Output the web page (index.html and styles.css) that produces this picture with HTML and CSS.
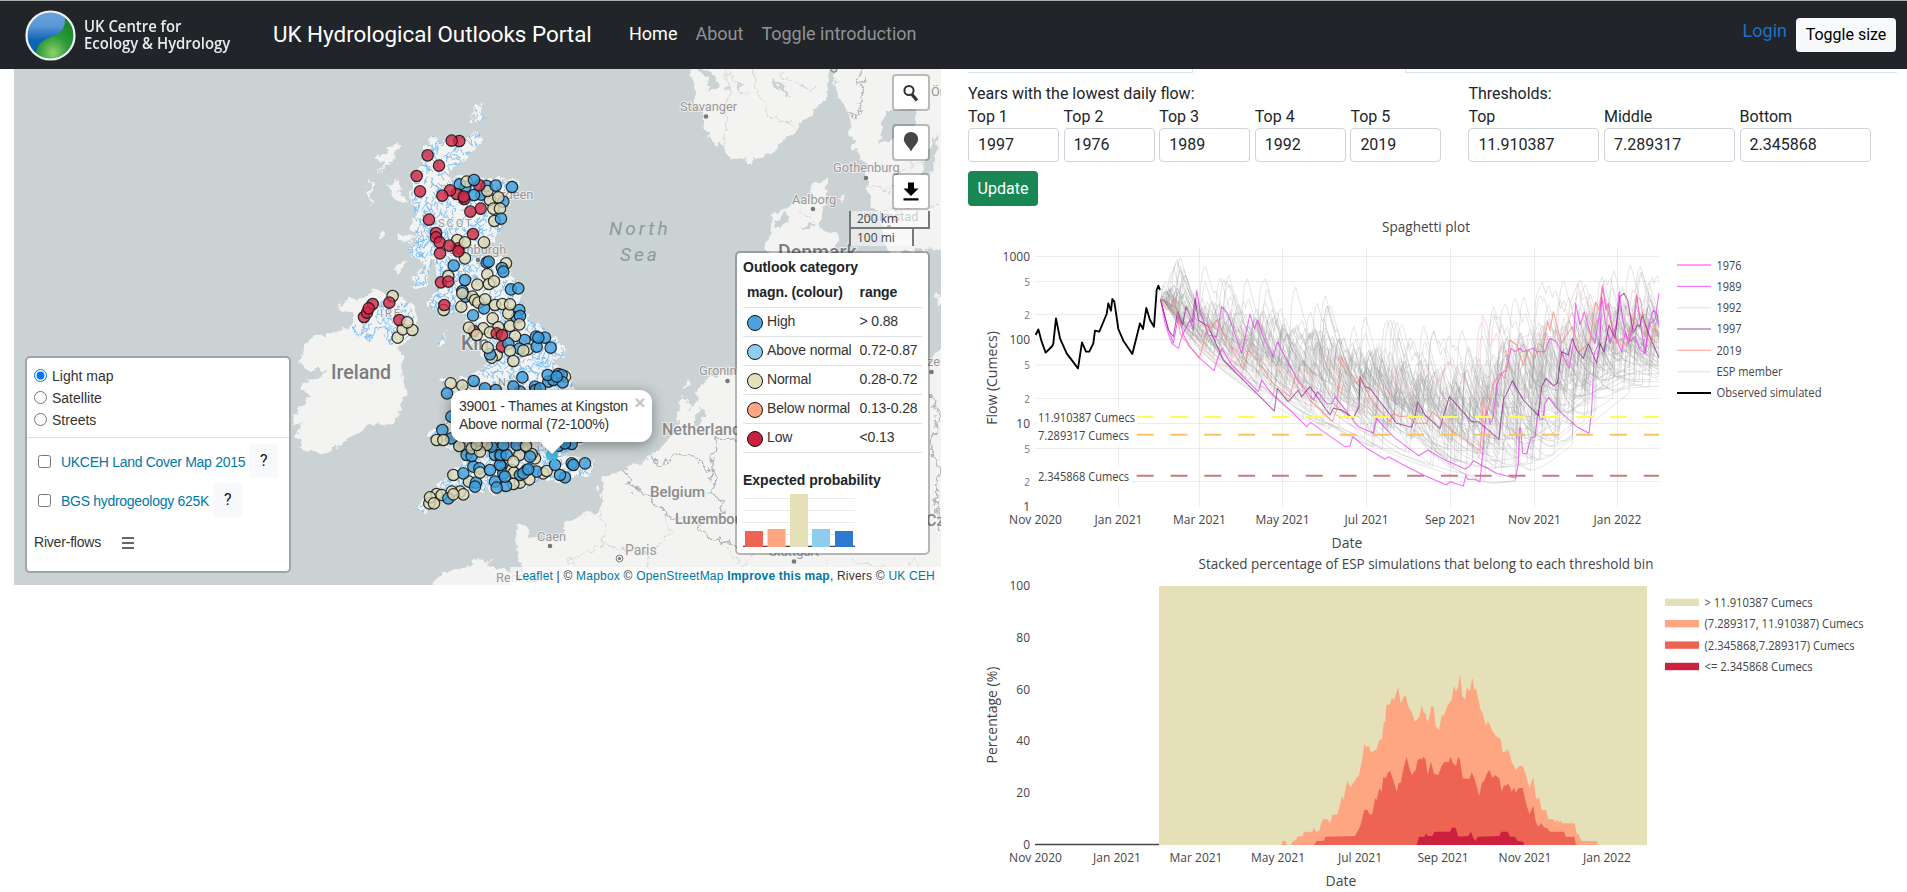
FILE: index.html
```html
<!DOCTYPE html>
<html lang="en">
<head>
<meta charset="utf-8">
<title>UK Hydrological Outlooks Portal</title>
<link rel="stylesheet" href="styles.css">
</head>
<body>
<header class="navbar">
  <div class="brand-logo">
    <svg width="51" height="51" viewBox="0 0 51 51">
      <defs>
        <linearGradient id="lb" x1="0" y1="0" x2="0" y2="1"><stop offset="0" stop-color="#6ba3dc"/><stop offset=".3" stop-color="#5b97d6"/><stop offset=".6" stop-color="#0f62b4"/></linearGradient>
        <radialGradient id="lg" cx=".45" cy=".85" r=".7"><stop offset="0" stop-color="#8fd06a"/><stop offset=".55" stop-color="#2f9c38"/><stop offset="1" stop-color="#1c8a2c"/></radialGradient>
      </defs>
      <circle cx="25.500" cy="25.500" r="24" fill="url(#lb)"/>
      <path d="M49 21A24 24 0 0 1 11 44.500C11 33 20 29 30 25.500C37 22.500 41 17 39.500 6.500A24 24 0 0 1 49 21Z" fill="url(#lg)"/>
      <circle cx="25.500" cy="25.500" r="24" fill="none" stroke="#eef3f5" stroke-width="2.200"/>
    </svg>
    <span class="brand-name">UK Centre for<br>Ecology &amp; Hydrology</span>
  </div>
  <span class="site-title">UK Hydrological Outlooks Portal</span>
  <nav class="links"><a class="active">Home</a><a>About</a><a>Toggle introduction</a></nav>
  <div class="account"><a class="login">Login</a><button class="btn btn-light">Toggle size</button></div>
</header>

<main class="page">
  <section class="map">
    <svg class="basemap" viewBox="14 69 927 516" width="927" height="516">
      <defs>
        <filter id="coast" x="-5%" y="-5%" width="110%" height="110%"><feTurbulence type="fractalNoise" baseFrequency=".11" numOctaves="3" seed="4"/><feDisplacementMap in="SourceGraphic" scale="13" xChannelSelector="R" yChannelSelector="G"/></filter>
        <clipPath id="rivers-clip"><use href="#gb" transform="translate(290 80) scale(.3333)"/><use href="#ni" transform="translate(290 80) scale(.3333)"/><use href="#ork" transform="translate(290 80) scale(.3333)"/></clipPath>
      </defs>
      <g class="land" filter="url(#coast)">
        <g transform="translate(290 80) scale(.3333)">
          <path id="gb" d="M430 165L450 185L490 170L530 175L550 158L573 160L570 185L530 230L500 262L470 285L480 300L505 290L540 300L600 298L685 300L680 330L660 360L650 400L640 440L610 480L560 505L500 520L560 525L600 530L650 540L665 575L690 620L700 665L715 720L765 745L800 780L825 800L820 830L790 840L810 870L780 885L835 870L850 920L870 960L870 1000L880 1090L850 1110L800 1125L830 1130L900 1135L915 1150L900 1185L860 1190L820 1210L760 1195L710 1225L670 1215L620 1240L560 1230L530 1250L500 1260L490 1240L450 1250L420 1270L410 1300L370 1285L400 1260L440 1235L460 1200L490 1170L540 1130L570 1100L530 1110L480 1100L440 1090L410 1070L450 1045L480 1000L500 960L460 930L455 905L520 890L570 880L585 850L570 820L540 780L530 720L520 690L480 705L430 695L415 670L440 640L440 590L435 540L425 550L410 615L370 620L380 580L405 540L370 530L350 510L385 470L360 440L375 400L360 350L370 310L372 290L395 250L400 215Z"/>
          <path d="M240 630L300 640L340 650L360 680L385 720L370 760L330 800L340 880L345 930L325 1010L310 1030L240 1035L150 1090L95 1120L50 1110L10 1060L40 1030L5 1040L20 990L60 950L30 930L60 900L110 870L50 870L30 850L40 790L80 765L130 760L175 745L190 700L140 690L165 660L205 655Z"/>
          <path id="ni" d="M240 660L300 645L340 650L360 680L385 720L370 760L330 790L300 795L270 750L240 785L200 770L185 740L225 700Z"/>
          <path id="ork" d="M550 90L580 75L570 100L590 115L560 130L548 120ZM445 790L470 750L465 780L450 795Z"/>
          <path d="M330 180L325 210L300 250L270 280L285 250L262 235ZM238 300L250 310L245 375L236 350ZM293 310L325 300L330 340L352 375L318 360ZM315 460L375 465L360 490L325 480ZM310 570L348 540L325 592ZM365 600L410 570L415 605L370 620ZM270 460h14v10h-14Z"/>
        </g>
        <path d="M430 590L437 576L446 571L467 566L482 560L500 568L514 574L522 571L513 527L527 526L530 537L537 539L557 537L567 523L597 511L602 507L600 490L602 477L623 470L647 458L655 455L670 437L677 420L681 399L686 398L690 409L698 402L695 390L703 383L707 377L737 372L762 368L770 350L765 300L767 252L768 233L773 217L787 207L807 200L813 187L830 177L827 190L823 205L820 227L840 235L833 250L840 330L900 360L920 372L936 350L950 346L950 595Z"/>
        <path d="M688 60L696 97L702 112L702 127L712 140L730 157L753 162L773 153L797 127L813 113L827 97L831 60ZM834 60L838 97L847 110L850 130L853 150L867 163L867 183L872 207L883 227L888 252L950 250L950 60ZM650 453L665 450L663 457L648 456ZM839 197L845 196L842 201ZM936 292L945 300L940 310ZM683 387L690 378L686 392Z"/>
      </g>
      <g class="water" filter="url(#coast)"><path d="M880 143L885 112L917 108L912 130L895 138ZM922 175L927 155L938 133L932 172ZM772 224L785 213L790 222L780 227ZM800 228L815 224L812 228ZM697 69L712 85L708 92L720 88L712 72ZM730 78L745 95L740 84ZM770 80L790 98L784 86ZM690 425L700 408L705 412L697 425Z"/></g>
      <g class="borders" filter="url(#coast)">
        <path d="M623 470L632 487L641 492L650 500L660 505L667 514L672 519L690 518L708 538L728 541L736 548"/><path d="M647 460L662 465L677 455L698 458L705 468L716 478L710 495L722 500L724 512L712 522"/><path d="M710 480L712 456L717 438L735 440"/><path d="M861 62L859 85L866 78L860 105L855 120L848 112"/><path d="M933 395L938 420L930 450L940 470L935 500L941 530"/>
        <g class="thin"><path d="M597 510L604 525L603 545L570 560L578 575"/><path d="M728 548L740 565L715 578M604 545L645 552L655 585M667 514L670 530L655 552"/><path d="M728 72L727 120L722 150M752 69L760 95L770 118L790 122L797 130M775 70L810 92L813 84M800 210L820 225M867 185L890 190L905 165L941 160M880 212L941 205"/><path d="M830 560L815 585M850 560L890 572L915 560L941 590M752 556L740 575"/></g>
      </g>
      <g class="rivers" clip-path="url(#rivers-clip)" id="riverLayer"></g>
      <g class="labels">
        <g class="city">
          <text x="680" y="111">Stavanger</text><circle cx="706" cy="116.500" r="2.300"/>
          <text x="833" y="172">Gothenburg</text><circle cx="866" cy="178" r="2.300"/>
          <text x="792" y="204">Aalborg</text><circle cx="813" cy="209" r="2.300"/>
          <text x="863" y="221">Halmstad</text><circle cx="889" cy="227" r="2.300"/>
          <text x="699" y="375">Groningen</text><circle cx="727.500" cy="381" r="2.300"/>
          <text x="537" y="541">Caen</text><circle cx="550" cy="546" r="2.300"/>
          <text x="496" y="582">Rennes</text>
          <text x="625" y="555" class="big">Paris</text><circle cx="619.500" cy="558.500" r="3.400" class="ring"/><circle cx="619.500" cy="558.500" r="1.600"/><circle cx="834" cy="69" r="3.200" class="ring"/>
          <text x="769" y="556">Stuttgart</text><circle cx="794" cy="561.500" r="2.300"/>
          <text x="931" y="96">Ör</text><text x="927" y="366">ze</text><circle cx="931.500" cy="372" r="2.300"/>
          <text x="479" y="199">Aberdeen</text><text x="449" y="254">Edinburgh</text><circle cx="478" cy="260" r="2.300"/>
          <text x="438" y="227" class="region">SCOT</text><text x="380" y="317" class="region">IRE</text><text x="498" y="386" class="region">No</text>
        </g>
        <g class="country">
          <text x="778" y="259" class="l">Denmark</text><text x="662" y="435">Netherlands</text><text x="650" y="497" class="m">Belgium</text><text x="675" y="524" class="s">Luxembourg</text><text x="331" y="379" class="l">Ireland</text><text x="461" y="350" class="l">Kin</text><text x="926" y="526">Cz</text>
        </g>
        <text class="sea" x="609" y="235">North</text><text class="sea" x="620" y="261">Sea</text>
      </g>
      <g id="stations" class="stations"></g>
    </svg>

    <div class="tools">
      <button><svg width="18" height="18" viewBox="0 0 18 18"><circle cx="7" cy="6.500" r="4.600" fill="none" stroke="#333" stroke-width="2"/><path d="M10 10.500L15 16.500" stroke="#333" stroke-width="3.200"/></svg></button>
      <button><svg width="16" height="20" viewBox="0 0 16 20"><path d="M8 0A7.200 7.200 0 0 0 .8 7.200C.8 11.500 6 15 8 19.500C10 15 15.200 11.500 15.200 7.200A7.200 7.200 0 0 0 8 0Z" fill="#464646"/></svg></button>
      <button><svg width="16" height="19" viewBox="0 0 16 19"><path d="M5 .5H11V6.500H15.500L8 14L.5 6.500H5ZM.5 16.300H15.500V18.500H.5Z"/></svg></button>
    </div>
    <div class="scale"><div class="km">200 km</div><div class="mi">100 mi</div></div>

    <div class="layers">
      <div class="base">
        <label><input type="radio" name="b" checked>Light map</label>
        <label><input type="radio" name="b">Satellite</label>
        <label><input type="radio" name="b">Streets</label>
      </div>
      <div class="overlay"><input type="checkbox"><a>UKCEH Land Cover Map 2015</a><span class="help">?</span></div>
      <div class="overlay"><input type="checkbox"><a>BGS hydrogeology 625K</a><span class="help">?</span></div>
      <div class="flows">River-flows<svg width="12" height="12" viewBox="0 0 12 12"><path d="M0 1H12M0 6H12M0 11H12" stroke="#333" stroke-width="1.400"/></svg></div>
    </div>

    <div class="legend">
      <b>Outlook category</b>
      <div class="lrow head"><span>magn. (colour)</span><span>range</span></div>
      <div class="lrow"><span><i class="dot high"></i>High</span><span>&gt; 0.88</span></div>
      <div class="lrow"><span><i class="dot above"></i>Above normal</span><span>0.72-0.87</span></div>
      <div class="lrow"><span><i class="dot normal"></i>Normal</span><span>0.28-0.72</span></div>
      <div class="lrow"><span><i class="dot below"></i>Below normal</span><span>0.13-0.28</span></div>
      <div class="lrow"><span><i class="dot low"></i>Low</span><span>&lt;0.13</span></div>
      <b class="prob">Expected probability</b>
      <svg width="112" height="54" viewBox="0 0 112 54"><path d="M0 5.500H112M0 17.500H112M0 29.500H112M0 41.500H112" stroke="#eaeaea"/><path d="M0 53.300H112" stroke="#444" stroke-width="1.300"/><path fill="#ed6453" d="M2 38H20V54H2Z"/><path fill="#fea681" d="M24.500 36H42.500V54H24.500Z"/><path fill="#e6e0b9" d="M47 1H65V54H47Z"/><path fill="#8fcdee" d="M69 36H87V54H69Z"/><path fill="#2c7acd" d="M92 38H110V54H92Z"/></svg>
    </div>

    <div class="popup"><span class="close">×</span>39001 - Thames at Kingston<br>Above normal (72-100%)</div>
    <div class="attribution"><a>Leaflet</a> | © <a>Mapbox</a> © <a>OpenStreetMap</a> <a><b>Improve this map</b></a>, Rivers © <a>UK CEH</a></div>
  </section>

  <section class="panel">
    <div class="tabs"><span class="tab-a"></span><span class="tab-gap"></span><span class="tab-b"></span></div>
    <form class="params">
      <div class="group years">
        <div class="caption">Years with the lowest daily flow:</div>
        <div class="fields">
          <label>Top 1<input value="1997"></label><label>Top 2<input value="1976"></label><label>Top 3<input value="1989"></label><label>Top 4<input value="1992"></label><label>Top 5<input value="2019"></label>
        </div>
      </div>
      <div class="group limits">
        <div class="caption">Thresholds:</div>
        <div class="fields">
          <label>Top<input value="11.910387"></label><label>Middle<input value="7.289317"></label><label>Bottom<input value="2.345868"></label>
        </div>
      </div>
    </form>
    <button class="btn btn-success">Update</button>
    <svg class="chart" id="chart" viewBox="968 206 929 686" width="929" height="686"></svg>
  </section>
</main>
<script src="script.js"></script>
</body>
</html>
```
FILE: styles.css
```css
* { box-sizing: border-box; }
body { margin: 0; font-family: Roboto, sans-serif; font-size: 16px; line-height: 1.5; color: #212529; background: #fff; height: 892px; overflow: hidden; }
.navbar { height: 69px; background: #212529; border-top: 1px solid #a9adaa; display: flex; align-items: center; padding: 0 11px 0 25px; }
.brand-logo { display: flex; align-items: center; gap: 8px; width: 248px; }
.brand-name { color: #e8eaeb; font: 600 16px/17px "Open Sans", sans-serif; white-space: nowrap; display: inline-block; transform: scaleX(.93); transform-origin: left; }
.site-title { color: #fff; font-size: 22.4px; width: 356px; white-space: nowrap; line-height: 30px; margin-top: -3px; }
.links { display: flex; gap: 18px; font-size: 18px; margin-top: -3px; color: #909294; }
.links .active { color: #fff; }
.account { margin-left: auto; display: flex; align-items: center; gap: 9px; }
.login { color: #1c70c8; font-size: 18px; margin-top: -10px; }
.btn { font: 16px/22px Roboto, sans-serif; border: 0; border-radius: 4px; padding: 0; }
.btn-light { width: 100px; height: 34px; background: #f8f9fa; color: #000; }
.btn-success { display: block; width: 70px; height: 35px; background: #198754; color: #fff; margin-top: 9px; }
.page { display: grid; grid-template-columns: 927px 929px; gap: 27px; padding-left: 14px; }
.map { position: relative; height: 516px; background: #cad2d3; overflow: hidden; font-family: "Liberation Sans", Arial, sans-serif; font-size: 14px; color: #333; }
.basemap { display: block; }
.land path { fill: #f3f3f2; }
.water path { fill: #cad2d3; }
.borders { fill: none; stroke: #b3b5b6; stroke-width: 1.5; }
.borders .thin { stroke: #d3d4d4; stroke-width: 1; }
.rivers path { fill: none; stroke: #7cbff5; stroke-width: 1; }
.labels text { paint-order: stroke; stroke: #f3f3f2; stroke-width: 2px; stroke-opacity: .8; font-family: Roboto, sans-serif; }
.city text { font-size: 12.8px; fill: #989a9b; }
.city .big { font-size: 14px; }
.city .region { letter-spacing: 2px; font-size: 11px; }
.city circle { fill: #777; }
.city .ring { fill: none; stroke: #777; }
.country text { font-size: 16px; font-weight: 500; fill: #898b8c; }
.country .l { font-size: 19.5px; fill: #7b7d7e; }
.country .m { font-size: 15px; }
.country .s { font-size: 14.5px; }
.labels .sea { fill: #8b9c9c; stroke: none; font-size: 19px; font-style: italic; letter-spacing: 3px; }
.stations circle { stroke: #111; stroke-width: 1.2; stroke-opacity: .85; fill-opacity: .8; }
.tools { position: absolute; left: 878px; top: 5px; display: grid; gap: 12.5px; }
.tools button { width: 38px; height: 37px; background: #fff; background-clip: padding-box; border: 2px solid rgba(0,0,0,.23); border-radius: 4px; padding: 0; display: grid; place-items: center; }
.scale { position: absolute; left: 835px; top: 142px; font: 12px/15px "Open Sans", sans-serif; color: #444; }
.scale div { border: 2px solid #777; border-top: 0; background: rgba(255,255,255,.5); padding-left: 6px; height: 18px; width: 81px; }
.scale .mi { width: 65px; border-bottom: 0; height: 17px; line-height: 18px; }
.layers { position: absolute; left: 11px; top: 287px; width: 266px; height: 217px; background: #fff; border: 2px solid #9fa5a8; border-radius: 5px; padding-top: 7px; }
.base { border-bottom: 1px solid #ddd; height: 73px; padding-left: 7px; }
.base label { display: flex; align-items: center; height: 22px; }
.base input { margin: 0 5px 2px 0; width: 13px; height: 13px; accent-color: #0075ff; }
.overlay { display: flex; align-items: center; height: 34px; margin: 6px 0 5px 11px; letter-spacing: -.29px; }
.overlay + .overlay { margin-top: 5px; }
.overlay input { margin: 0 10px 0 0; width: 13px; height: 13px; }
.layers a, .attribution a { color: #0078a8; }
.layers a { position: relative; top: 1px; }
.help { width: 29px; height: 34px; margin-left: 4px; background: #f8f9fa; border-radius: 4px; text-align: center; font: 16px/34px Roboto, sans-serif; color: #111; }
.flows { display: flex; align-items: center; gap: 21px; padding: 10px 0 0 7px; letter-spacing: -.2px; }
.legend { position: absolute; left: 721px; top: 182px; width: 195px; height: 304px; background: #fff; background-clip: padding-box; border: 2px solid rgba(0,0,0,.25); border-radius: 5px; padding: 4px 6px; color: #212529; }
.legend b { display: block; height: 22px; }
.lrow { display: grid; grid-template-columns: 112.600px 1fr; height: 29px; border-bottom: 1px solid #dee2e6; line-height: 26px; padding-left: 4px; white-space: nowrap; width: 179px; color: #333; letter-spacing: -.15px; }
.lrow.head { height: 29px; font-weight: bold; color: #212529; letter-spacing: -.1px; }
.lrow.head span { line-height: 26px; }
.dot { display: inline-block; width: 16px; height: 16px; border: 1px solid #111; border-radius: 50%; margin: 0 4px -5px 0; }
.high { background: #4ba2dc; } .above { background: #8fcdee; } .normal { background: #e6e0b9; } .below { background: #fea681; } .low { background: #cb213f; }
.legend .prob { margin-top: 17px; height: 23px; }
.legend svg { display: block; }
.popup { position: absolute; left: 437px; top: 321px; width: 201px; height: 52px; background: #fff; border-radius: 12px; box-shadow: 0 3px 14px rgba(0,0,0,.4); padding: 7px 8px; line-height: 18px; white-space: nowrap; letter-spacing: -.26px; }
.popup::after { content: ""; position: absolute; left: 88px; top: 51px; border: 13px solid transparent; border-top-color: #fff; border-bottom: 0; }
.close { position: absolute; right: 7px; top: 3px; font: bold 19px/19px "Liberation Sans", sans-serif; color: #c3c3c3; }
.attribution { position: absolute; right: 0; bottom: 0; height: 18px; background: rgba(255,255,255,.7); padding: 0 6px; font-size: 12px; letter-spacing: .21px; line-height: 18px; white-space: nowrap; }
.tabs { display: flex; height: 4px; }
.tab-a, .tab-b { border-bottom: 1px solid #dee2e6; }
.tab-a { width: 225px; border-right: 1px solid #dee2e6; }
.tab-gap { width: 212px; }
.tab-b { flex: 1; border-left: 1px solid #dee2e6; }
.params { display: flex; gap: 27px; padding-top: 9px; }
.caption { height: 23px; line-height: 24px; }
.fields { display: flex; gap: 4.6px; }
.fields label { display: block; width: 91px; line-height: 23px; }
.limits .fields label { width: 131px; }
.fields input { display: block; width: 100%; height: 34px; border: 1px solid #ced4da; border-radius: 4px; padding: 0 9px 1px; font: 16px Roboto, sans-serif; color: #212529; }
.chart { display: block; font-family: "Open Sans", sans-serif; font-size: 12px; }
.chart text { fill: #444; }
.chart .title { font-size: 14px; }
.chart .minor { font-size: 10px; fill: #777; }
.grid { stroke: #ebebeb; stroke-width: 1; }
```
FILE: script.js
```js
const NS = 'http://www.w3.org/2000/svg';
function add(parent, tag, attrs, text) {
  const e = document.createElementNS(NS, tag);
  for (const k in attrs) e.setAttribute(k, attrs[k]);
  if (text !== undefined) e.textContent = text;
  parent.appendChild(e);
  return e;
}
let seed = 20210201;
function rnd() { seed = (seed * 1664525 + 1013904223) % 4294967296; return seed / 4294967296; }
function pairs(s) { return s.trim().split(/\s+/).map(p => p.split(',').map(Number)); }
function lerp(table, x) {
  for (let i = 1; i < table.length; i++) if (x <= table[i][0]) {
    const [a, b] = [table[i - 1], table[i]];
    return a[1] + (b[1] - a[1]) * (x - a[0]) / (b[0] - a[0]);
  }
  return table[table.length - 1][1];
}

/* River network */
let d = '';
for (let i = 0; i < 5200; i++) {
  const x = 345 + rnd() * 260, y = 95 + rnd() * 425;
  d += `M${x.toFixed(1)} ${y.toFixed(1)}`;
  const dx = rnd() * 3 - 1.5;
  for (let k = 0; k < 4; k++) d += `l${(dx + rnd() * 3 - 1.5).toFixed(1)} ${(rnd() * 4 - 1).toFixed(1)}`;
}
add(document.getElementById('riverLayer'), 'path', { d });

/* Gauging stations */
const groups = {
  '#dcd8b4': '530,305 592,333 600,360 625,352 610,386 630,386 613,423 502,480 525,487 582,487 525,535 648,550 475,588 592,583 562,614 597,612 612,604 517,640 547,650 585,658 565,668 555,660 514,680 461,690 615,675 637,672 660,673 608,715 655,700 537,743 580,745 625,742 660,738 688,733 675,768 600,757 560,765 593,803 660,812 713,808 700,812 620,825 605,833 670,843 308,648 352,727 338,748 367,750 323,773 482,910 517,917 825,890 440,1080 460,1080 508,1098 545,1105 570,1115 590,1095 560,1095 708,1098 688,1125 725,1122 735,1135 670,1145 665,1170 672,1178 490,1185 570,1178 537,1205 770,1173 718,1198 760,1180 670,1212 690,1208 420,1252 440,1242 455,1245 418,1270 432,1270 485,1235 510,1235 520,1243 490,1243',
  '#ce2544': '485,182 508,183 413,226 447,257 380,288 390,334 457,347 480,331 500,342 523,357 521,350 568,316 541,395 572,386 417,419 438,459 438,472 449,487 478,497 505,505 505,514 450,520 549,462 453,607 475,605 463,675 248,672 298,668 236,685 231,698 222,711 328,720 551,753 620,760 636,765 636,800',
  '#3c9cdc': '509,313 526,320 552,300 552,345 574,344 590,318 617,317 666,321 640,365 633,416 491,557 525,600 517,633 527,650 596,545 590,548 640,575 636,564 663,628 685,625 549,706 582,685 688,690 680,712 690,708 704,780 738,770 745,773 765,773 740,800 782,803 688,806 655,790 600,823 551,903 697,892 773,885 800,890 815,885 805,882 790,900 818,907 775,905 585,925 617,930 670,920 690,935 735,920 750,925 737,930 471,940 484,1010 457,1050 484,1075 530,1125 545,1128 640,1095 680,1095 615,1125 632,1125 650,1125 632,1130 630,1155 550,1160 568,1165 600,1170 520,1180 555,1220 558,1208 615,1205 620,1223 648,1218 640,1180 690,1185 710,1170 740,1175 720,1130 700,1180 715,1168 795,1155 810,1185 825,1192 845,1150 850,1155 885,1150 805,1098 825,1090 845,1092 870,1070 475,1255 635,1160 645,1190 605,1100'
};
const st = [];
for (const c in groups) for (const p of pairs(groups[c])) st.push([rnd() + (c === '#ce2544' ? .4 : 0), c, p]);
st.sort((a, b) => a[0] - b[0]);
const layer = document.getElementById('stations');
for (const [, c, [x, y]] of st) add(layer, 'circle', { cx: 290 + x / 3, cy: 80 + y / 3, r: 5.7, fill: c });
add(layer, 'circle', { cx: 552, cy: 455, r: 5.7, fill: '#2aa3d8', style: 'stroke:#2cc4d8' });

/* Spaghetti plot */
const chart = document.getElementById('chart');
function label(x, y, t, anchor, cls, width) {
  const attrs = { x, y, 'text-anchor': anchor || 'middle', class: cls || '' };
  if (width) { attrs.textLength = width; attrs.lengthAdjust = 'spacingAndGlyphs'; }
  return add(chart, 'text', attrs, t);
}
const months = ['Nov 2020', 'Jan 2021', 'Mar 2021', 'May 2021', 'Jul 2021', 'Sep 2021', 'Nov 2021', 'Jan 2022'];
const tx1 = [1035.5, 1118.5, 1199.5, 1282.5, 1366.5, 1450.5, 1534.5, 1617.5];
const ys = [[256.5, '1000'], [281.5, '5'], [314.5, '2'], [339.5, '100'], [365, '5'], [398.5, '2'], [423.5, '10'], [448.5, '5'], [481.5, '2'], [506.5, '1']];
label(1426, 232, 'Spaghetti plot', 'middle', 'title', 88);
ys.forEach(([y, t]) => {
  if (t !== '1') add(chart, 'path', { d: `M1035 ${y}H1659`, class: 'grid' });
  const small = t === '5' || t === '2';
  label(1030, y + (small ? 4 : 4.5), t, 'end', small ? 'minor' : '');
});
tx1.forEach((x, i) => {
  if (i) add(chart, 'path', { d: `M${x} 249V507`, class: 'grid' });
  label(x, 524, months[i]);
});
const g = add(chart, 'g', { transform: 'translate(960 210) scale(.33333)', fill: 'none', 'stroke-linejoin': 'round', 'stroke-width': 3 });
const upper = [[602, 240], [630, 200], [700, 235], [900, 275], [1100, 335], [1300, 400], [1470, 440], [1600, 350], [1750, 280], [1900, 240], [2100, 235]];
const lower = [[602, 275], [612, 340], [630, 390], [650, 420], [700, 455], [800, 525], [950, 615], [1100, 670], [1250, 730], [1450, 795], [1590, 820], [1700, 800], [1790, 720], [1850, 630], [1980, 530], [2100, 530]];
for (let n = 0; n < 60; n++) {
  const w = Math.pow(rnd(), .75);
  let x = 602, y = 270, target = null, path = 'M602 270';
  while (x < 2097) {
    const U = lerp(upper, x), L = lerp(lower, x), base = U + (L - U) * (.5 + .5 * w);
    if (target === null && rnd() < .1 * (1.15 - w * .6)) {
      target = base + (U - base) * (.1 + rnd() * .8);
      if (rnd() < .06) target = U - rnd() * 80;
      if (target > y - 8) target = y - 10 - rnd() * 25;
      target = Math.max(target, U - 80);
    }
    if (target !== null) { y += (target - y) * .6; if (Math.abs(y - target) < 9) target = null; }
    else y += y < base ? Math.min(18, (base - y) * .09 + 1) : Math.max(-4, (base - y) * .12);
    x = Math.min(x + 5, 2097);
    path += `L${x} ${y.toFixed(1)}`;
  }
  add(g, 'path', { d: path, stroke: 'rgba(150,150,150,.25)' });
}
function joined(a, b) { return pairs(a).concat(pairs(b).map(([x, y]) => [x + 1320, y])); }
function series(pts, stroke, width) { add(g, 'path', { d: 'M' + pts.map(p => p.join(' ')).join('L'), stroke, 'stroke-width': width || 3.2 }); }
series(joined('602,270 650,330 720,400 770,460 800,470 860,380 900,440 990,500 1040,470 1060,530 1090,450 1110,460 1170,600 1200,610 1260,530 1290,560 1305,470 1350,560 1400,480', '85,485 110,530 148,455 200,520 237,550 243,400 247,315 262,350 270,410 290,370 310,440 345,390 400,370 450,380 500,370 510,280 533,220 545,270 560,260 580,350 605,270 650,420 680,360 697,240 710,250 720,330 777,360'), 'rgba(255,192,203,.65)');
series(joined('602,270 615,340 635,400 655,415 668,370 690,410 720,445 762,482 775,440 785,415 815,465 895,545 905,510 930,545 1000,610 1040,650 1052,637 1090,665 1155,710 1170,708 1178,680 1220,715 1275,748 1285,740 1325,762', '70,795 140,825 150,815 190,828 198,795 203,808 225,808 240,815 247,740 255,640 260,600 270,640 280,620 290,525 305,490 320,480 333,415 345,425 360,415 370,425 400,415 410,425 435,425 450,385 470,395 490,440 508,475 520,400 527,280 540,345 553,305 570,370 585,400 600,300 608,230 618,300 625,280 640,370 655,400 665,425 675,370 690,395 705,380 720,420 735,430 750,340 765,330 777,250'), 'rgba(245,60,245,.75)');
series(joined('602,270 620,340 640,400 655,320 670,370 690,330 700,360 710,240 720,300 745,375 770,380 785,290 803,310 845,430 870,312 883,355 893,330 910,380 940,440 952,395 975,440 1010,505 1060,570 1073,545 1100,580 1115,582 1125,560 1175,625 1195,650 1240,670 1250,625 1300,680', '55,737 85,720 125,745 195,777 210,768 220,752 290,790 347,805 355,760 358,655 362,655 368,730 380,732 392,685 405,680 415,600 420,630 430,625 435,580 445,562 480,605 530,650 567,670 575,600 583,430 600,390 605,260 615,330 630,400 650,340 657,245 670,340 685,400 700,340 710,255 720,330 735,430 745,350 760,300 770,310 777,345'), 'rgba(230,50,235,.7)');
series(joined('602,270 625,360 640,380 653,305 668,345 678,290 697,335 705,265 715,330 745,350 790,450 860,520 943,603 952,535 985,575 1015,540 1025,560 1050,530 1110,615 1120,595 1145,600 1180,625 1197,590 1200,500 1215,530 1230,535 1310,640 1355,652 1365,620 1373,575 1395,615', '120,655 130,620 148,560 215,635 235,635 297,688 310,570 325,540 337,512 370,570 415,617 425,530 438,505 460,527 472,520 485,425 505,435 517,385 530,420 550,445 565,400 590,460 600,400 612,425 627,345 645,385 660,260 672,250 683,270 700,370 712,345 720,350 727,315 745,370 777,443'), 'rgba(128,0,128,.6)');
series(joined('602,270 620,298 630,298 640,268 650,300 660,370 685,405 718,445 735,380 742,340 755,355 770,330 800,390 850,478 865,420 890,450 940,520 990,560 1005,500 1050,570 1117,635 1130,600 1143,440 1165,480 1190,520 1200,505 1240,580 1290,635 1300,610 1320,620', '20,618 50,640 80,640 97,605 160,665 240,722 245,660 250,560 258,620 265,590 280,520 300,490 315,505 330,390 350,405 370,465 385,420 405,445 415,400 430,410 443,335 450,360 460,305 485,400 500,375 517,350 540,425 570,395 580,320 587,275 597,300 607,225 620,290 650,400 665,385 680,410 690,350 700,370 710,260 722,270 735,360 752,405 765,355 777,380'), 'rgba(250,128,114,.7)');
series(pairs('227,375 235,358 245,395 257,428 277,408 280,400 288,325 300,385 320,430 354,475 366,397 378,425 388,425 400,400 405,362 418,365 440,312 445,280 453,302 457,267 463,275 475,357 490,392 517,432 540,340 549,357 559,294 570,330 582,350 590,240 595,227 600,240'), '#000', 5.5);
[[417, '#fffc55', '11.910387 Cumecs', 97], [434.7, '#ffc262', '7.289317 Cumecs', 91], [475.8, '#c97a80', '2.345868 Cumecs', 91]].forEach(([y, c, t, w]) => {
  add(chart, 'path', { d: `M1136.700 ${y}H1659`, stroke: c, 'stroke-width': 2, 'stroke-dasharray': '17 16.800' });
  add(chart, 'rect', { x: 1037, y: y - 9, width: w + 3, height: 19, fill: '#fff' });
  label(1038, y + 5, t, 'start', '', w);
});
label(1347, 548, 'Date', 'middle', 'title');
add(chart, 'text', { transform: 'translate(997 378) rotate(-90)', 'text-anchor': 'middle', class: 'title' }, 'Flow (Cumecs)');
[['1976', '#ff9cff', 2], ['1989', '#fb78fb', 1.3], ['1992', '#fddce5', 1.3], ['1997', '#cfa0d4', 2], ['2019', '#fcb3aa', 1.3], ['ESP member', '#e6e6e6', 1.3, 66], ['Observed simulated', '#000', 2, 105]].forEach(([t, c, w, len], i) => {
  const y = 265 + i * 21.33;
  add(chart, 'path', { d: `M1677 ${y}H1711`, stroke: c, 'stroke-width': w });
  label(1716.5, y + 4.5, t, 'start', '', len || 25);
});

/* Stacked threshold chart */
label(1426, 569, 'Stacked percentage of ESP simulations that belong to each threshold bin', 'middle', 'title', 455);
const tx2 = [1035.5, 1117, 1196, 1278, 1360, 1443, 1525, 1607];
tx2.forEach((x, i) => label(x, 862, months[i]));
for (let i = 0; i <= 5; i++) label(1030, 849 - i * 51.8, String(i * 20), 'end');
add(chart, 'rect', { x: 1159, y: 586, width: 488, height: 259, fill: '#e6e0b9' });
add(chart, 'path', { d: 'M1035 844.500H1159', stroke: '#444', 'stroke-width': 1.3 });
const a = add(chart, 'g', { transform: 'translate(1240 660) scale(.33333)' });
[['#fea681', '123,555 128,543 137,543 140,555 152,555 158,543 168,540 172,530 188,528 192,516 216,515 222,503 228,515 238,512 244,488 250,477 263,478 270,490 277,465 292,463 300,435 305,408 310,420 322,362 332,382 345,360 357,345 368,290 373,252 380,262 385,256 393,277 410,268 418,240 426,238 431,187 436,185 439,135 450,133 456,113 462,120 475,82 482,130 490,113 497,105 505,140 515,155 525,185 538,172 545,135 552,160 557,160 562,185 568,172 574,138 581,142 587,198 597,210 605,168 612,165 625,133 636,118 641,78 648,92 655,80 659,45 663,65 667,108 675,118 680,83 690,92 697,53 703,90 708,85 715,118 722,150 728,160 738,198 744,182 757,213 768,228 782,238 788,275 797,275 800,268 808,275 815,305 828,330 838,318 848,318 858,345 868,383 880,352 887,410 893,420 898,410 905,450 918,450 925,477 940,478 945,487 950,480 957,487 962,482 968,490 1004,490 1010,520 1017,525 1025,543 1070,543 1075,555'],
 ['#ed6453', '222,555 230,543 252,542 257,530 345,528 352,515 360,500 368,470 373,450 383,450 388,463 397,463 405,415 410,420 418,385 425,395 430,350 437,355 443,340 450,332 458,355 470,395 476,370 482,368 490,328 500,290 507,320 515,345 527,330 532,303 540,295 545,300 550,290 557,300 563,345 573,305 582,342 595,345 605,318 612,307 627,305 632,290 638,308 648,318 655,290 660,300 668,355 688,357 695,337 703,355 718,408 725,370 733,362 740,342 748,330 758,355 765,345 778,355 785,395 792,375 798,378 805,370 815,395 822,383 828,398 835,385 848,383 858,430 868,463 880,438 887,485 895,500 903,490 912,502 922,505 930,515 972,515 977,530 1003,530 1008,555'],
 ['#cb213f', '530,555 537,530 553,530 558,520 563,528 577,528 583,515 630,515 636,503 647,503 655,530 685,528 693,515 700,535 707,543 712,530 778,528 784,515 803,515 810,530 825,530 832,543 850,545 852,555']
].forEach(([fill, pts]) => add(a, 'polygon', { points: pts, fill }));
[['> 11.910387 Cumecs', '#e6e0b9', 108], ['(7.289317, 11.910387) Cumecs', '#fea681', 159], ['(2.345868,7.289317) Cumecs', '#ed6453', 150], ['<= 2.345868 Cumecs', '#cb213f', 108]].forEach(([t, c, len], i) => {
  const y = 602.3 + i * 21.4;
  add(chart, 'rect', { x: 1665, y: y - 3.7, width: 34, height: 7.4, fill: c });
  label(1704.5, y + 4.7, t, 'start', '', len);
});
label(1341, 886, 'Date', 'middle', 'title');
add(chart, 'text', { transform: 'translate(997 715) rotate(-90)', 'text-anchor': 'middle', class: 'title' }, 'Percentage (%)');
```
